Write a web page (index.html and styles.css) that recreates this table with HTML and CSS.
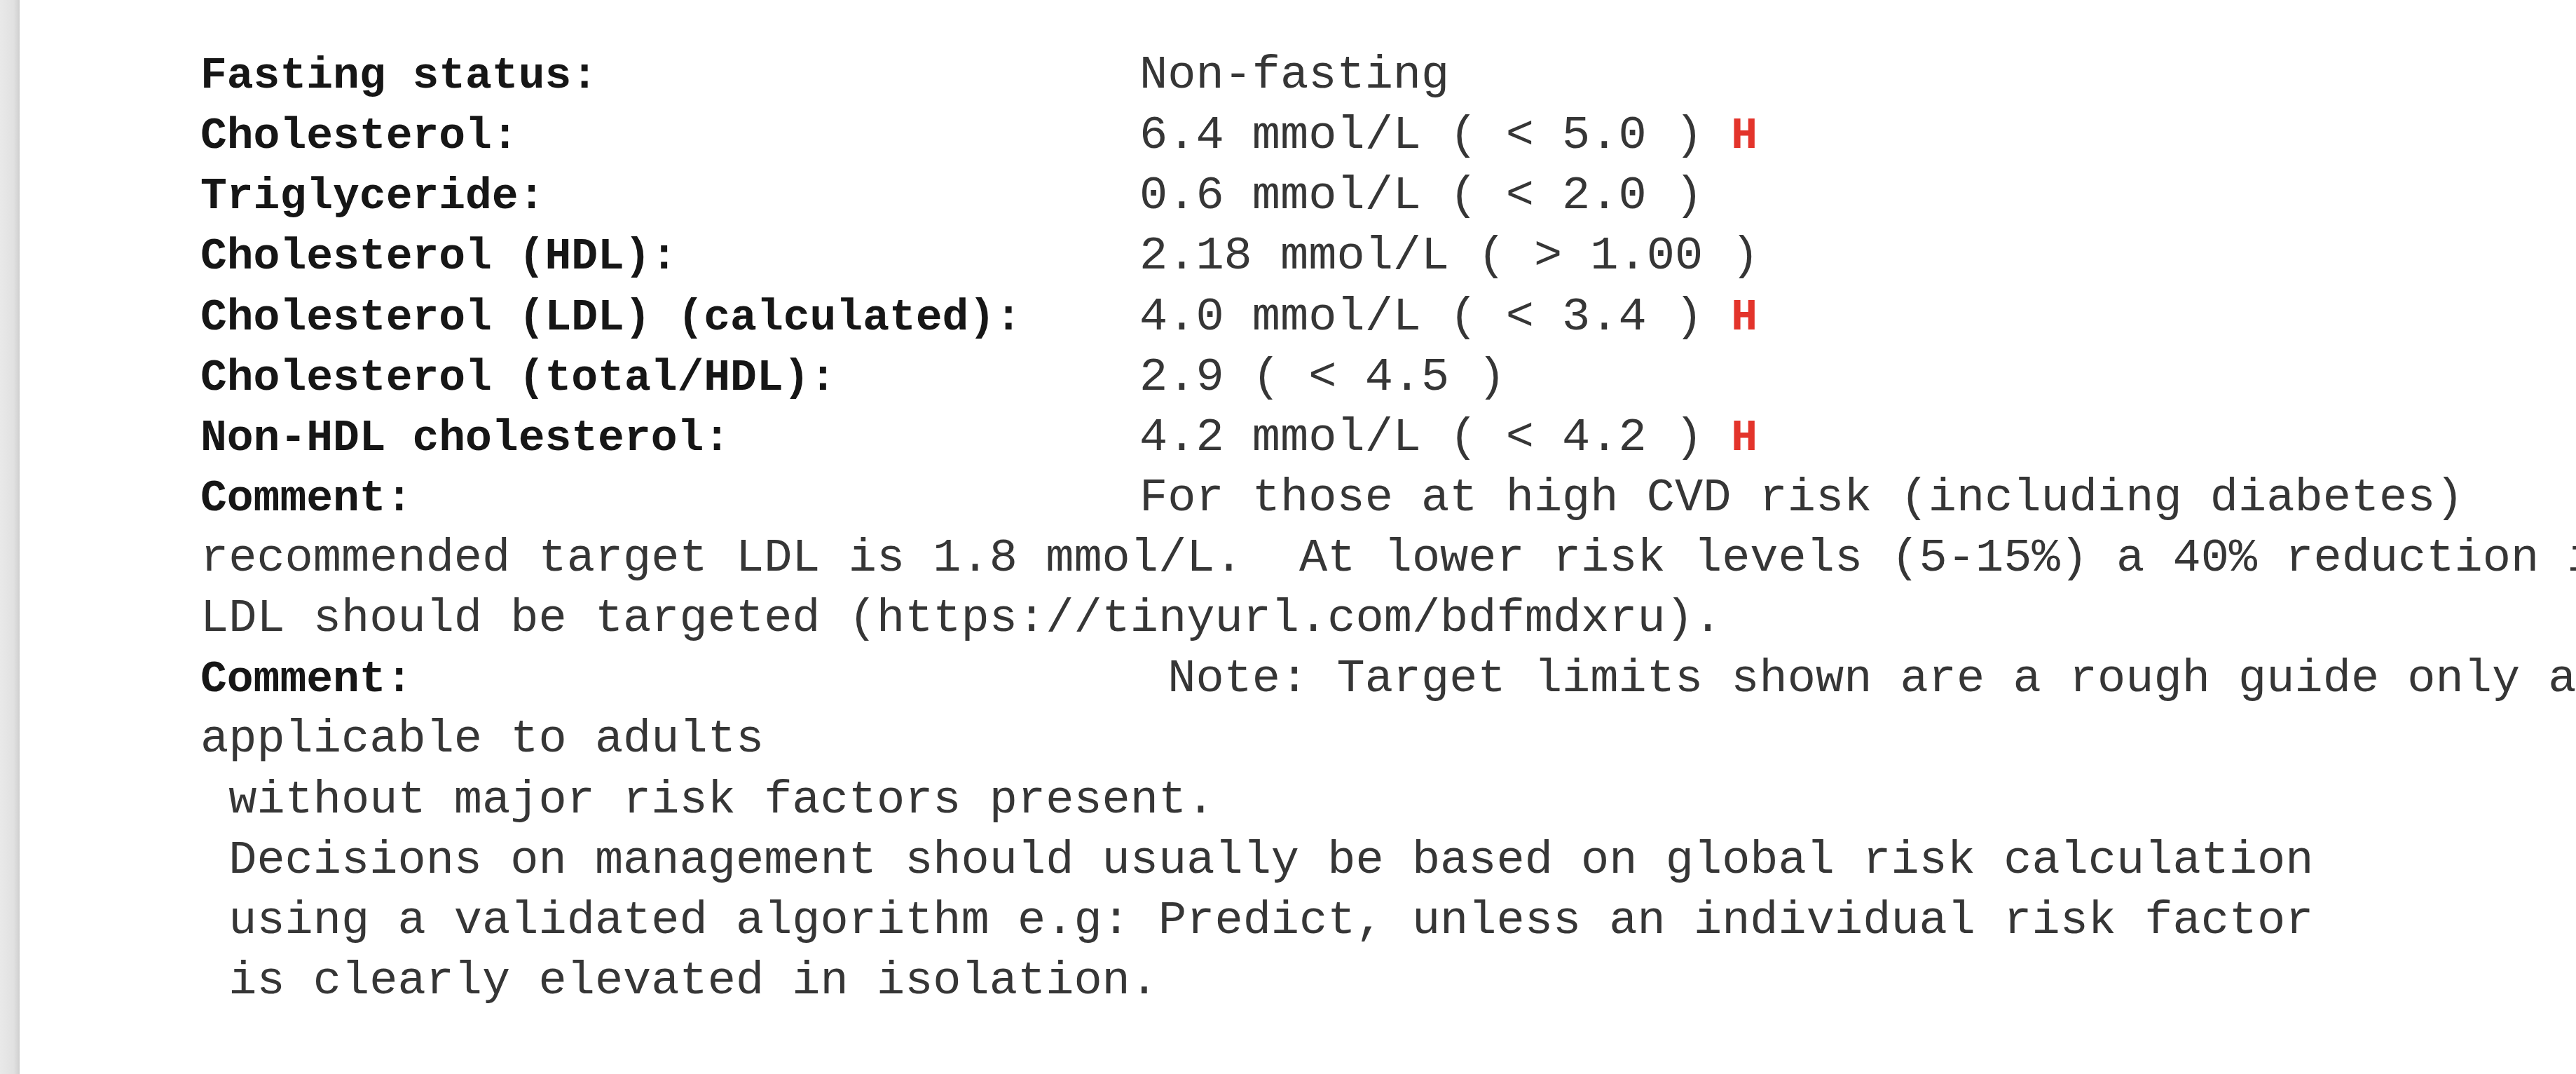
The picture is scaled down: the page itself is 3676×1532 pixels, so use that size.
FILE: index.html
```html
<!DOCTYPE html>
<html lang="en">
<head>
<meta charset="utf-8">
<title>Lipid results</title>
<link rel="stylesheet" href="styles.css">
</head>
<body>
<div class="page">
  <div class="gutter"></div>
  <main class="report">
    <div class="row"><span class="label">Fasting status:</span><span class="val">Non-fasting</span></div>
    <div class="row"><span class="label">Cholesterol:</span><span class="val">6.4 mmol/L ( &lt; 5.0 ) <b class="flag">H</b></span></div>
    <div class="row"><span class="label">Triglyceride:</span><span class="val">0.6 mmol/L ( &lt; 2.0 )</span></div>
    <div class="row"><span class="label">Cholesterol (HDL):</span><span class="val">2.18 mmol/L ( &gt; 1.00 )</span></div>
    <div class="row"><span class="label">Cholesterol (LDL) (calculated):</span><span class="val">4.0 mmol/L ( &lt; 3.4 ) <b class="flag">H</b></span></div>
    <div class="row"><span class="label">Cholesterol (total/HDL):</span><span class="val">2.9 ( &lt; 4.5 )</span></div>
    <div class="row"><span class="label">Non-HDL cholesterol:</span><span class="val">4.2 mmol/L ( &lt; 4.2 ) <b class="flag">H</b></span></div>
    <div class="row"><span class="label">Comment:</span><span class="val">For those at high CVD risk (including diabetes)</span></div>
    <div class="line">recommended target LDL is 1.8 mmol/L.  At lower risk levels (5-15%) a 40% reduction in</div>
    <div class="line">LDL should be targeted (https://tinyurl.com/bdfmdxru).</div>
    <div class="row"><span class="label">Comment:</span><span class="val"> Note: Target limits shown are a rough guide only and</span></div>
    <div class="line">applicable to adults</div>
    <div class="line"> without major risk factors present.</div>
    <div class="line"> Decisions on management should usually be based on global risk calculation</div>
    <div class="line"> using a validated algorithm e.g: Predict, unless an individual risk factor</div>
    <div class="line"> is clearly elevated in isolation.</div>
  </main>
</div>
</body>
</html>
```

FILE: styles.css
```css
html, body {
  margin: 0;
  padding: 0;
  background: #ffffff;
  overflow: hidden;
}

.page {
  display: flex;
  min-height: 100vh;
}

.gutter {
  flex: 0 0 28px;
  background: linear-gradient(to right, #e9e9e9 0%, #e1e1e1 70%, #cfcfcf 100%);
}

.report {
  flex: 1 1 auto;
  padding: 64px 0 0 258px;
  font-family: "Liberation Mono", "Courier New", monospace;
  font-size: 67px;
  line-height: 86.13px;
  color: #363636;
}

.row {
  white-space: nowrap;
}

.line {
  white-space: pre;
}

.label {
  display: inline-block;
  width: 1340px;
  font-size: 63px;
  line-height: 1;
  font-weight: bold;
  color: #161616;
}

.val {
  white-space: pre;
}

.flag {
  color: #e3342b;
  font-weight: bold;
  font-size: 63px;
  line-height: 1;
}
```
